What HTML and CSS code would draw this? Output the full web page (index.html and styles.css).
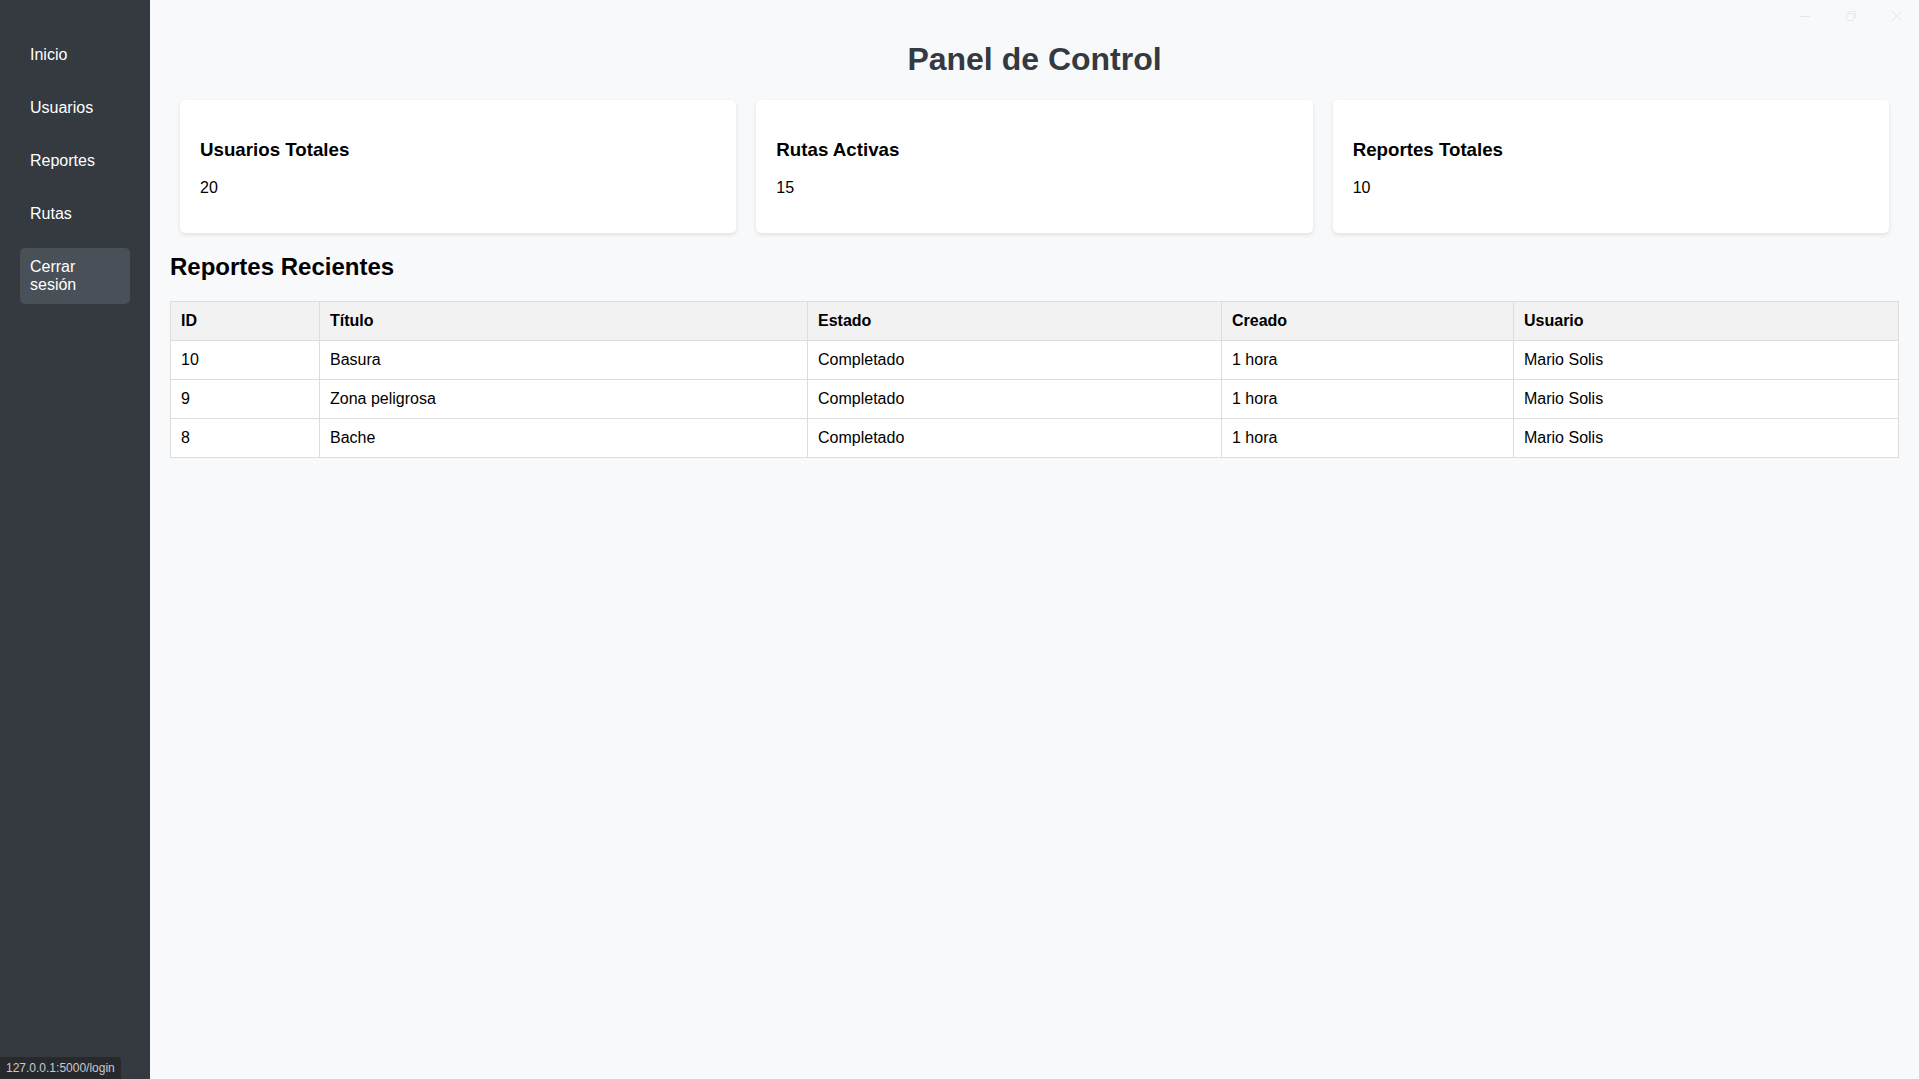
FILE: index.html
```html
<!DOCTYPE html>
<html lang="es">
<head>
    <meta charset="UTF-8">
    <meta name="viewport" content="width=device-width, initial-scale=1.0">
    <title>Panel de Control</title>
    <link rel="stylesheet" href="styles.css">
</head>
<body>

    <!-- SIDEBAR -->
    <nav class="sidebar">
        <a href="#" class="nav-link">Inicio</a>
        <a href="#" class="nav-link">Usuarios</a>
        <a href="#" class="nav-link">Reportes</a>
        <a href="#" class="nav-link">Rutas</a>
        <a href="#" class="nav-link active">Cerrar sesión</a>
    </nav>

    <!-- CONTENT -->
    <main class="main">
        <h1>Panel de Control</h1>

        <div class="cards">
            <div class="card">
                <h3>Usuarios Totales</h3>
                <p>20</p>
            </div>
            <div class="card">
                <h3>Rutas Activas</h3>
                <p>15</p>
            </div>
            <div class="card">
                <h3>Reportes Totales</h3>
                <p>10</p>
            </div>
        </div>

        <h2>Reportes Recientes</h2>
        <table class="reports">
            <colgroup>
                <col class="col-id">
                <col class="col-title">
                <col class="col-state">
                <col class="col-created">
                <col class="col-user">
            </colgroup>
            <thead>
                <tr>
                    <th>ID</th>
                    <th>Título</th>
                    <th>Estado</th>
                    <th>Creado</th>
                    <th>Usuario</th>
                </tr>
            </thead>
            <tbody>
                <tr>
                    <td>10</td>
                    <td>Basura</td>
                    <td>Completado</td>
                    <td>1 hora</td>
                    <td>Mario Solis</td>
                </tr>
                <tr>
                    <td>9</td>
                    <td>Zona peligrosa</td>
                    <td>Completado</td>
                    <td>1 hora</td>
                    <td>Mario Solis</td>
                </tr>
                <tr>
                    <td>8</td>
                    <td>Bache</td>
                    <td>Completado</td>
                    <td>1 hora</td>
                    <td>Mario Solis</td>
                </tr>
            </tbody>
        </table>
    </main>

    <!-- window controls (faint) -->
    <div class="win-controls">
        <svg width="12" height="12" viewBox="0 0 12 12"><path d="M1 6.5h10" stroke="#e6e7ec" stroke-width="1" fill="none"/></svg>
        <svg width="12" height="12" viewBox="0 0 12 12"><rect x="1.5" y="3.5" width="7" height="7" rx="1" stroke="#e6e7ec" fill="none"/><path d="M3.5 3.5V2.5a1 1 0 0 1 1-1h5a1 1 0 0 1 1 1v5a1 1 0 0 1-1 1h-1" stroke="#e6e7ec" fill="none"/></svg>
        <svg width="12" height="12" viewBox="0 0 12 12"><path d="M1 1l10 10M11 1L1 11" stroke="#e6e7ec" fill="none"/></svg>
    </div>

    <div class="status-bar">127.0.0.1:5000/login</div>

</body>
</html>
```

FILE: styles.css
```css
/* LAYOUT */
body {
    margin: 0;
    display: flex;
    min-height: 100vh;
    font-family: "Liberation Sans", Arial, sans-serif;
    background-color: #f8f9fa;
}

.sidebar {
    width: 150px;
    flex-shrink: 0;
    box-sizing: border-box;
    padding: 21px 20px 20px;
    background-color: #343a40;
    display: flex;
    flex-direction: column;
}

.nav-link {
    display: block;
    margin: 15px 0 0;
    padding: 10px;
    border-radius: 5px;
    color: white;
    text-decoration: none;
    font-size: 16px;
}

.nav-link.active {
    background-color: #495057;
}

.main {
    flex: 1;
    padding: 20px;
}

h1 {
    text-align: center;
    color: #343a40;
    font-size: 32px;
    margin: 21px 0 22px;
}

/* -------------------------------------- */

.cards {
    display: flex;
    gap: 20px;
    padding: 0 10px;
}

.card {
    flex: 1;
    background-color: white;
    border-radius: 5px;
    padding: 20px;
    box-shadow: 0 2px 4px rgba(0, 0, 0, 0.1);
}

.card h3 {
    font-size: 18.72px;
    margin: 18.72px 0;
}

.card p {
    margin: 16px 0;
}

h2 {
    font-size: 24px;
    margin: 20px 0;
}

/* -------------------------------------- */

.reports {
    width: 100%;
    border-collapse: collapse;
    background-color: white;
}

.reports th, .reports td {
    border: 1px solid #ddd;
    padding: 10px;
    text-align: left;
    font-size: 16px;
}

.reports th {
    background-color: #f2f2f2;
}

.col-id { width: 149px; }
.col-title { width: 488px; }
.col-state { width: 414px; }
.col-created { width: 292px; }
.col-user { width: 385px; }

/* -------------------------------------- */

.win-controls {
    position: fixed;
    top: 10px;
    right: 16px;
    display: flex;
    gap: 34px;
}

.status-bar {
    position: fixed;
    left: 0;
    bottom: 0;
    padding: 4px 6px;
    background-color: #27292c;
    color: #c8cacc;
    font-size: 12px;
    border-top-right-radius: 4px;
}
```
